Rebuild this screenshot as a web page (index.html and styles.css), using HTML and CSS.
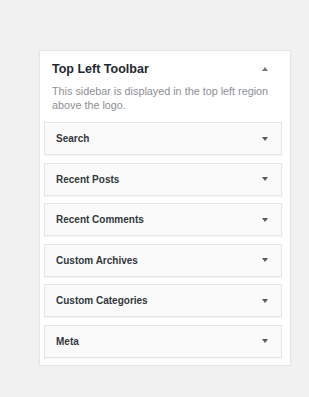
FILE: index.html
```html
<!DOCTYPE html>
<html lang="en">
<head>
    <meta charset="UTF-8">
    <meta name="viewport" content="width=device-width, initial-scale=1.0">
    <title>Widgets</title>
    <link rel="stylesheet" href="styles.css">
</head>
<body>
    <div class="sidebar-panel">
        <div class="sidebar-header">
            <h2>Top Left Toolbar</h2>
            <span class="arrow arrow-up"></span>
        </div>
        <p class="sidebar-desc">This sidebar is displayed in the top left region above the logo.</p>

        <div class="widget-list">
            <div class="widget"><span>Search</span><span class="arrow arrow-down"></span></div>
            <div class="widget"><span>Recent Posts</span><span class="arrow arrow-down"></span></div>
            <div class="widget"><span>Recent Comments</span><span class="arrow arrow-down"></span></div>
            <div class="widget"><span>Custom Archives</span><span class="arrow arrow-down"></span></div>
            <div class="widget"><span>Custom Categories</span><span class="arrow arrow-down"></span></div>
            <div class="widget"><span>Meta</span><span class="arrow arrow-down"></span></div>
        </div>
    </div>
</body>
</html>
```

FILE: styles.css
```css
/* Widget sidebar */
body {
    margin: 0;
    padding: 50px 0 0 39px;
    background-color: #f1f1f1;
    font-family: "Liberation Sans", Arial, sans-serif;
    color: #23282d;
}

.sidebar-panel {
    width: 238px;
    background-color: #fff;
    border: 1px solid #e5e5e5;
    box-shadow: 0 1px 1px rgba(0, 0, 0, 0.04);
    padding: 10px 8px 7px 4px;
}

.sidebar-header {
    display: flex;
    align-items: center;
    justify-content: space-between;
    padding: 0 14px 0 8px;
    height: 16px;
}

h2 {
    margin: 0;
    font-size: 12.5px;
    font-weight: bold;
    line-height: 16px;
}

.sidebar-desc {
    margin: 7px -8px 10px 8px;
    font-size: 10.8px;
    line-height: 14px;
    color: #8c8f94;
}

.widget-list {
    display: flex;
    flex-direction: column;
    gap: 7.6px;
}

.widget {
    height: 31px;
    display: flex;
    align-items: center;
    justify-content: space-between;
    padding: 0 13px 0 11px;
    background-color: #fafafa;
    border: 1px solid #e5e5e5;
    box-shadow: 0 1px 1px rgba(0, 0, 0, 0.04);
    font-size: 10px;
    font-weight: bold;
    color: #32373c;
}

.arrow {
    width: 0;
    height: 0;
    border-left: 3px solid transparent;
    border-right: 3px solid transparent;
}

.arrow-up {
    border-bottom: 4px solid #72777c;
}

.arrow-down {
    border-top: 4px solid #555d66;
}
```
